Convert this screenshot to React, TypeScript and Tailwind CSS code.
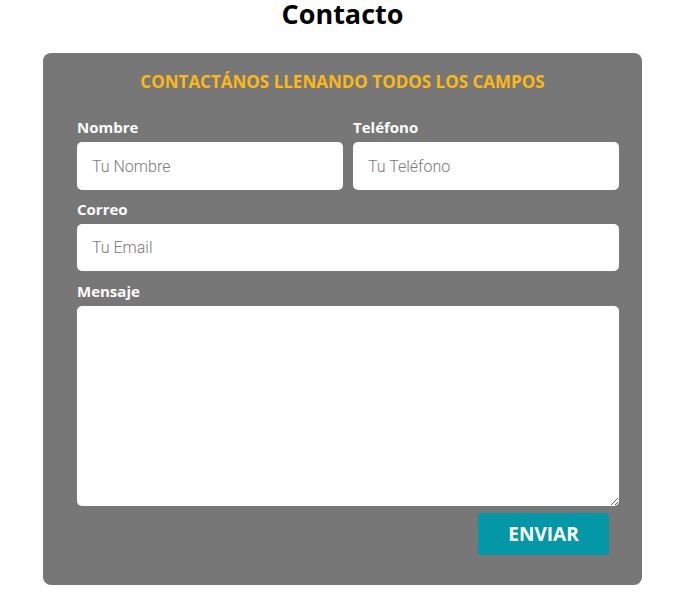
import React from "react";

const Contacto = () => {
  return (
    <div className="min-h-[601px] bg-white" style={{ fontFamily: '"Open Sans", "Noto Sans", sans-serif' }}>
      <div className="w-[599px] ml-[43px]">
        <h1 className="text-center text-[27px] font-bold leading-[28px] text-black mb-[25px]">
          Contacto
        </h1>
        <form className="rounded-lg bg-[#777777] pt-[19px] pb-[30px] pl-[34px] pr-[23px]">
          <h2 className="text-center text-[17px] font-bold leading-5 text-[#fcb817] -ml-[11px] mb-[25px]">
            CONTACTÁNOS LLENANDO TODOS LOS CAMPOS
          </h2>
          <div className="grid grid-cols-2 gap-x-[10px]">
            <div>
              <label className="block text-[15px] font-bold leading-5 text-white mb-[5px]">Nombre</label>
              <input
                placeholder="Tu Nombre"
                className="block h-[48px] w-full rounded-[5px] bg-white px-[15px] text-[16px] text-gray-700 placeholder:text-[#7a7a7a] outline-none"
                style={{ fontFamily: "Roboto, sans-serif", fontWeight: 300 }}
              />
            </div>
            <div>
              <label className="block text-[15px] font-bold leading-5 text-white mb-[5px]">Teléfono</label>
              <input
                placeholder="Tu Teléfono"
                className="block h-[48px] w-full rounded-[5px] bg-white px-[15px] text-[16px] text-gray-700 placeholder:text-[#7a7a7a] outline-none"
                style={{ fontFamily: "Roboto, sans-serif", fontWeight: 300 }}
              />
            </div>
          </div>
          <label className="block mt-[9px] text-[15px] font-bold leading-5 text-white mb-[5px]">Correo</label>
          <input
            placeholder="Tu Email"
            className="block h-[47px] w-full rounded-[5px] bg-white px-[15px] text-[16px] text-gray-700 placeholder:text-[#7a7a7a] outline-none"
            style={{ fontFamily: "Roboto, sans-serif", fontWeight: 300 }}
          />
          <label className="block mt-[10px] text-[15px] font-bold leading-5 text-white mb-[5px]">Mensaje</label>
          <textarea className="block h-[200px] w-full rounded-[5px] bg-white p-[15px] outline-none" />
          <div className="flex justify-end mt-[7px] pr-[10px]">
            <button
              type="button"
              className="h-[42px] w-[131px] rounded-[3px] bg-[#0397a7] text-[19px] font-bold text-white"
            >
              ENVIAR
            </button>
          </div>
        </form>
      </div>
    </div>
  );
};

export default function App() {
  return <Contacto />;
}
